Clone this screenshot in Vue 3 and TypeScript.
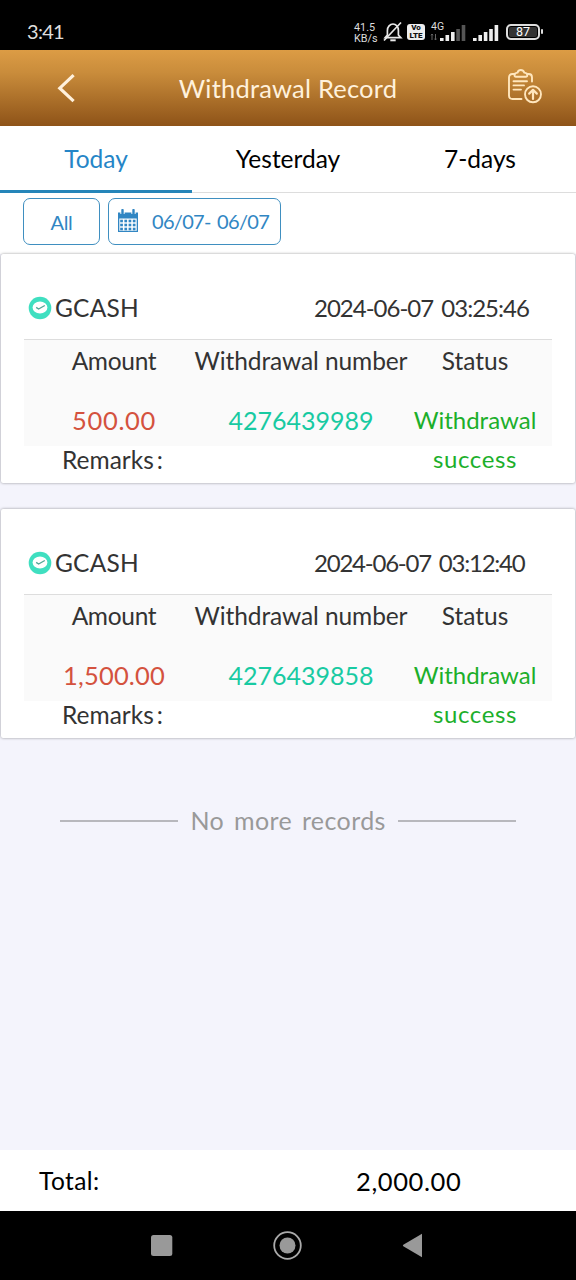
<script setup lang="ts">
interface WithdrawalEntry {
  time: string
  amount: string
  number: string
}

const entries: WithdrawalEntry[] = [
  { time: '2024-06-07 03:25:46', amount: '500.00', number: '4276439989' },
  { time: '2024-06-07 03:12:40', amount: '1,500.00', number: '4276439858' },
]
const calendarRows = [13, 17, 21]
const calendarCols = [3.2, 7.4, 11.6, 15.8]
</script>

<template>
  <div class="screen">
    <div class="status-bar">
      <span class="clock">3:41</span>
      <div class="indicators">
        <div class="speed"><span>41.5</span><span>KB/s</span></div>
        <svg class="bell" width="20" height="22" viewBox="0 0 20 22" fill="none" stroke="#e8e8e8" stroke-width="1.7">
          <path d="M2.2 16.6 L4.4 14 V9.5 C4.4 5.7 7 3 10 3 C13 3 15.4 5.7 15.4 9.5 V14 L17.8 16.6 Z" />
          <path d="M18 1.5 L1 19.5" />
          <path d="M7.3 19.3 H12.7" stroke-width="2" />
        </svg>
        <div class="volte"><span>Vo</span><span>LTE</span></div>
        <svg class="mobile" width="36" height="24" viewBox="0 0 36 24">
          <text x="1" y="9" font-size="10.5" fill="#ddd" font-family="Roboto, sans-serif">4G</text>
          <path d="M2 19 V13 M1 14.3 L2 13 L3 14.3 M5.5 13 V19 M4.5 17.7 L5.5 19 L6.5 17.7" stroke="#666" fill="none" />
          <path d="M10 17h3.6v3h-3.6zM15.5 14h3.6v6h-3.6zM21 11h3.6v9h-3.6z" fill="#eee" />
          <path d="M26.3 8h3.6v12h-3.6zM31.7 4h3.6v16h-3.6z" fill="#555" />
        </svg>
        <svg class="signal" width="26" height="24" viewBox="0 0 26 24" fill="#eee">
          <path d="M0 17h3.6v3h-3.6zM5.4 14h3.6v6h-3.6zM10.8 11h3.6v9h-3.6zM16.2 8h3.6v12h-3.6zM21.6 4h3.6v16h-3.6z" />
        </svg>
        <div class="battery"><span>87</span></div>
        <i class="battery-tip"></i>
      </div>
    </div>

    <header class="header">
      <svg class="back" width="20" height="32" viewBox="0 0 20 32" fill="none" stroke="#fff1dc" stroke-width="3.2">
        <path d="M17.6 3.2 L3.8 16.2 L17.6 29.2" />
      </svg>
      <h1>Withdrawal Record</h1>
      <svg class="clipboard" width="36" height="36" viewBox="0 0 36 36" fill="none" stroke="#ffe6bd" stroke-width="1.9" stroke-linecap="round" stroke-linejoin="round">
        <path d="M14.5 31 H5.5 Q2 31 2 27.5 V9.5 Q2 6 5.5 6 H7.5 M20.5 6 H21.8 Q25 6 25 9.5 V13.5" />
        <path d="M9 8.8 Q7.5 8.8 7.5 7 Q7.5 5 10.5 4.6 Q11.3 2 13.8 2 Q16.3 2 17.3 4.6 Q20.3 5 20.3 7 Q20.3 8.8 18.8 8.8 Z" />
        <path d="M6.5 13.2 H20 M6.5 17.4 H17 M6.5 21.6 H14" />
        <circle cx="26" cy="26.3" r="8" />
        <path d="M26 31 V22 M22.2 25.6 L26 21.8 L29.8 25.6" stroke-width="2.2" />
      </svg>
    </header>

    <nav class="tabs">
      <span class="tab active">Today</span>
      <span class="tab">Yesterday</span>
      <span class="tab">7-days</span>
    </nav>

    <div class="filters">
      <button class="all">All</button>
      <button class="range">
        <svg width="22" height="24" viewBox="0 0 22 24">
          <path d="M1 3.5 H21 V23 H1 Z" fill="#3186c3" />
          <path d="M2.3 9.5 H19.7 V21.8 H2.3 Z" fill="#fff" />
          <path d="M5.5 0.5 V5 M16.5 0.5 V5" stroke="#fff" stroke-width="4.2" />
          <path d="M5.5 1 V5 M16.5 1 V5" stroke="#3186c3" stroke-width="2.4" stroke-linecap="round" />
          <template v-for="y in calendarRows" :key="y">
            <rect v-for="x in calendarCols" :key="x" :x="x" :y="y - 2.3" width="2.7" height="2.6" fill="#3186c3" />
          </template>
        </svg>
        <span>06/07- 06/07</span>
      </button>
    </div>

    <main class="records">
      <article v-for="entry in entries" :key="entry.number" class="card">
        <div class="card-head">
          <svg width="24" height="24" viewBox="0 0 24 24">
            <circle cx="12" cy="12" r="11.3" fill="#3fdfc0" />
            <ellipse cx="12" cy="11.6" rx="7.4" ry="6" fill="#fff" />
            <path d="M8.2 11.4 L10.6 13 L16.8 9.5" fill="none" stroke="#54a696" stroke-width="1.4" />
          </svg>
          <span class="method">GCASH</span>
          <time>{{ entry.time }}</time>
        </div>
        <div class="table">
          <span class="amount-label">Amount</span>
          <span class="number-label">Withdrawal number</span>
          <span>Status</span>
          <span class="value amount">{{ entry.amount }}</span>
          <span class="value number">{{ entry.number }}</span>
          <span class="value status">Withdrawal<br /><b>success</b></span>
        </div>
        <div class="remarks">Remarks<i>:</i></div>
      </article>
      <div class="end"><hr /><span>No more records</span><hr /></div>
    </main>

    <footer class="total">
      <span class="total-label">Total:</span>
      <span class="total-value">2,000.00</span>
    </footer>

    <div class="nav-bar">
      <svg width="576" height="69" viewBox="0 0 576 69" fill="#999">
        <rect x="151" y="24" width="21.3" height="21" rx="2.5" />
        <circle cx="287.5" cy="34.5" r="13.3" fill="none" stroke="#aaa" stroke-width="1.8" />
        <circle cx="287.5" cy="34.5" r="8" />
        <path d="M403.3 33.7 L422 22.7 V46.3 L403.3 35.3 Q402.4 34.5 403.3 33.7 Z" />
      </svg>
    </div>
  </div>
</template>

<style>
body { margin: 0; }
</style>

<style scoped>
.screen {
  width: 576px;
  height: 1280px;
  display: flex;
  flex-direction: column;
  overflow: hidden;
  background: #f4f4fc;
  font-family: Lato, "Noto Sans", sans-serif;
  font-size: 24.5px;
  line-height: 30px;
  color: #333;
  white-space: nowrap;
}
.status-bar {
  flex: none;
  height: 50px;
  background: #000;
  display: flex;
  justify-content: space-between;
  box-sizing: border-box;
  padding: 17px 33px 0 27px;
  color: #ddd;
}
.clock { font-size: 20px; letter-spacing: -0.7px; line-height: 29px; }
.indicators { display: flex; padding-top: 4px; height: 24px; }
.speed {
  width: 29px;
  display: flex;
  flex-direction: column;
  font: 10.8px/10.5px Roboto, sans-serif;
  padding-top: 2px;
}
.bell { margin: 0 4px 0 0; }
.volte {
  width: 18px;
  height: 16px;
  margin-top: 3px;
  border-radius: 3px;
  background: #eee;
  color: #111;
  display: flex;
  flex-direction: column;
  align-items: center;
  font: 900 8px/7.5px Roboto, sans-serif;
}
.mobile { margin-left: 5px; }
.signal { margin-left: 7px; }
.battery {
  box-sizing: border-box;
  width: 34px;
  height: 16px;
  margin: 3px 0 0 7px;
  border: 2px solid #ddd;
  border-radius: 5px;
  display: flex;
  justify-content: center;
  background: #333;
  box-shadow: inset 0 0 0 1px #000;
  font: 12.5px/12.5px Roboto, sans-serif;
  color: #fff;
}
.battery-tip { width: 2px; height: 5px; margin: 8px 0 0 1px; background: #ddd; border-radius: 1px; }
.header {
  flex: none;
  height: 76px;
  box-sizing: border-box;
  padding: 0 33px 0 56px;
  display: grid;
  grid-template-columns: 20px 1fr 36px;
  align-items: center;
  background: linear-gradient(#dc9c45, #c98c3b 30%, #8e5318);
}
.back { margin-top: -1px; }
.header h1 {
  margin: 0;
  padding-right: 7px;
  text-align: center;
  font-size: 25.5px;
  font-weight: 400;
  letter-spacing: 0.2px;
  color: #fff1dc;
}
.clipboard { margin-top: -4px; }
.tabs {
  flex: none;
  height: 67px;
  box-sizing: border-box;
  border-bottom: 1px solid #ddd;
  display: grid;
  grid-template-columns: repeat(3, 192px);
  background: #fff;
  color: #000;
  text-align: center;
}
.tab { height: 67px; box-sizing: border-box; padding-top: 18px; }
.active { color: #2585c7; border-bottom: 3px solid #2585b9; }
.filters {
  flex: none;
  height: 61px;
  box-sizing: border-box;
  padding: 5px 0 0 23px;
  display: flex;
  gap: 8px;
  background: #fff;
}
.filters button {
  box-sizing: border-box;
  height: 47px;
  margin: 0;
  padding: 0;
  border: 1.3px solid #3f8fc0;
  border-radius: 7px;
  background: #fff;
  color: #3186c3;
  font-family: inherit;
  font-size: 20px;
}
.filters .all { width: 77px; padding-top: 1px; letter-spacing: -0.3px; }
.filters .range { width: 173px; display: flex; align-items: center; padding-left: 8px; }
.range svg { margin-top: -1px; }
.range span { margin: -1px 0 0 13px; letter-spacing: -0.7px; word-spacing: 2px; }
.records { flex: 1; }
.card {
  height: 229px;
  box-sizing: border-box;
  margin: 0 1px 26px;
  padding: 0 23px;
  background: #fff;
  border-radius: 2px;
  box-shadow: 0 0 3px rgba(0, 0, 0, 0.4);
}
.card-head {
  display: grid;
  grid-template-columns: 24px 262px 1fr;
  align-items: center;
  height: 86px;
  padding: 23px 0 0 4px;
  box-sizing: border-box;
  border-bottom: 1px solid #ddd;
}
.method { margin-left: 3px; letter-spacing: 0.2px; }
.card-head time { font-size: 24px; letter-spacing: -1px; word-spacing: 3px; }
.card:nth-child(2) time { letter-spacing: -1.23px; }
.table {
  height: 106px;
  box-sizing: border-box;
  padding-top: 6px;
  display: grid;
  grid-template-columns: 180px 194px 154px;
  grid-template-rows: 55px 40px;
  background: #fafafa;
  text-align: center;
}
.number-label { margin: 0 -15px; letter-spacing: -0.1px; }
.amount-label { letter-spacing: -0.3px; }
.value { line-height: 38px; }
.amount { color: #d4523e; font-size: 25.5px; letter-spacing: 0.7px; }
.card:nth-child(2) .amount { letter-spacing: 0.2px; }
.number { color: #18caa2; font-size: 25px; }
.status { color: #1caf2b; font-size: 24px; line-height: 39px; margin-top: -1px; }
.status b { font-weight: 400; letter-spacing: 0.6px; }
.remarks { margin: -1px 0 0 38px; line-height: 30px; }
.remarks i { font-style: normal; margin-left: 3px; }
.end { display: flex; align-items: center; justify-content: center; gap: 12px; color: #999; padding-top: 42px; }
.end span { margin: -1px -0.3px 0 0; font-size: 25px; letter-spacing: 0.4px; word-spacing: 3px; }
.end hr { width: 118px; height: 2px; margin: 1px 0 0; border: 0; background: #b8b8bd; }
.total {
  flex: none;
  height: 61px;
  box-sizing: border-box;
  display: flex;
  align-items: center;
  background: #fff;
  color: #000;
  padding-left: 39px;
}
.total-label { width: 317px; letter-spacing: 0.4px; }
.total-value { font-size: 25.5px; letter-spacing: 0.6px; }
.nav-bar { flex: none; height: 69px; background: #000; }
</style>
